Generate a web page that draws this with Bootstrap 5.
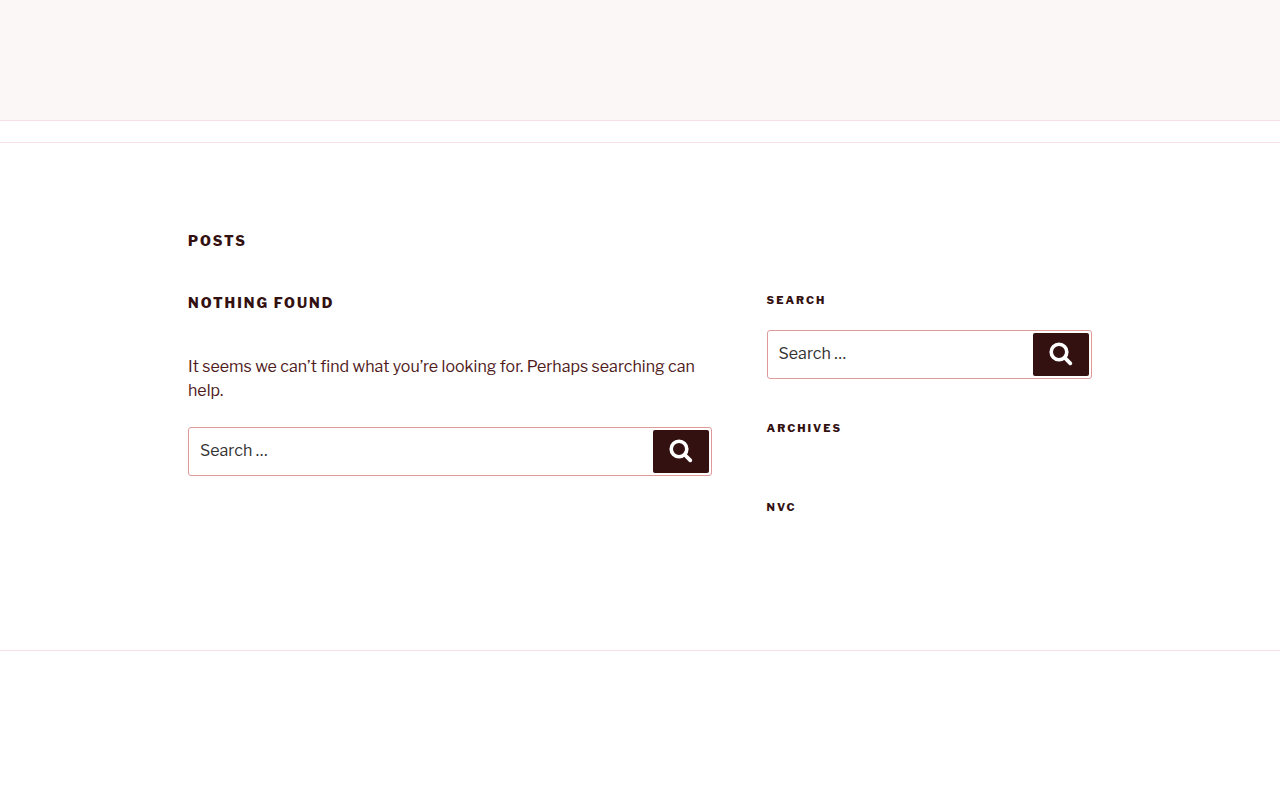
<!DOCTYPE html>
<html lang="en">
<head>
<meta charset="utf-8">
<meta name="viewport" content="width=device-width, initial-scale=1">
<title>Posts</title>
<link href="https://cdn.jsdelivr.net/npm/bootstrap@5.3.0/dist/css/bootstrap.min.css" rel="stylesheet">
<style>
body{font-family:"Libre Franklin","Inter",sans-serif;font-size:16px;line-height:24px;color:#4f1b1b;background:#fff}
.site-top{height:121px;background:#fbf7f6;border-bottom:1px solid #f8dfe3}
.site-nav{height:22px;border-bottom:1px solid #f8dfe3}
.wrap{max-width:904px;padding-top:88px;padding-bottom:134px}
.heading{font-size:14px;line-height:20px;font-weight:800;letter-spacing:2px;color:#331111;text-transform:uppercase}
.side-heading{font-size:11px;line-height:18px;margin-bottom:21px}
.columns{display:grid;grid-template-columns:58% 36%;justify-content:space-between;margin-top:40px}
.found{padding-top:2px}
.found .heading{margin-bottom:42px}
.intro{margin-bottom:24px}
.widget{display:flow-root;margin-bottom:40px}
.search-form{height:49px;border:1px solid #df9a9a;border-radius:3px;padding:2px}
.search-form .form-control{color:#333;background:transparent;padding:0 9px 2px}
.search-form .form-control::placeholder{color:#333;opacity:1}
.search-form .btn{width:56px;background:#331111;border-radius:2px}
.search-form svg{margin-bottom:2px}
.site-bottom{border-top:1px solid #f8dfe3}
@media (max-width:767px){.columns{grid-template-columns:100%;row-gap:48px}.wrap{padding-left:24px;padding-right:24px}}
</style>
</head>
<body>
<header class="site-top"></header>
<nav class="site-nav" aria-label="Main"></nav>
<main class="wrap mx-auto">
<h1 class="heading mb-0">Posts</h1>
<div class="columns">
<section class="found">
<h2 class="heading">Nothing Found</h2>
<p class="intro">It seems we can’t find what you’re looking for. Perhaps searching can help.</p>
<form class="search-form d-flex" role="search">
<input class="form-control border-0 shadow-none" type="search" aria-label="Search for:" placeholder="Search …">
<button class="btn border-0 p-0 flex-shrink-0 d-flex align-items-center justify-content-center" type="submit" aria-label="Search">
<svg width="24" height="24" viewBox="0 0 24 24" fill="none" stroke="#fff" aria-hidden="true"><circle cx="10" cy="10" r="7.8" stroke-width="3.6"/><path d="M16 16l5.3 5.3" stroke-width="3.8" stroke-linecap="round"/></svg>
</button>
</form>
</section>
<aside>
<section class="widget">
<h2 class="heading side-heading" id="side-search-title">Search</h2>
<form class="search-form d-flex" role="search">
<input class="form-control border-0 shadow-none" type="search" aria-labelledby="side-search-title" placeholder="Search …">
<button class="btn border-0 p-0 flex-shrink-0 d-flex align-items-center justify-content-center" type="submit" aria-label="Search">
<svg width="24" height="24" viewBox="0 0 24 24" fill="none" stroke="#fff" aria-hidden="true"><circle cx="10" cy="10" r="7.8" stroke-width="3.6"/><path d="M16 16l5.3 5.3" stroke-width="3.8" stroke-linecap="round"/></svg>
</button>
</form>
</section>
<section class="widget"><h2 class="heading side-heading">Archives</h2></section>
<section><h2 class="heading side-heading mb-0">NVC</h2></section>
</aside>
</div>
</main>
<footer class="site-bottom"></footer>
<script src="https://cdn.jsdelivr.net/npm/bootstrap@5.3.0/dist/js/bootstrap.bundle.min.js"></script>
</body>
</html>
